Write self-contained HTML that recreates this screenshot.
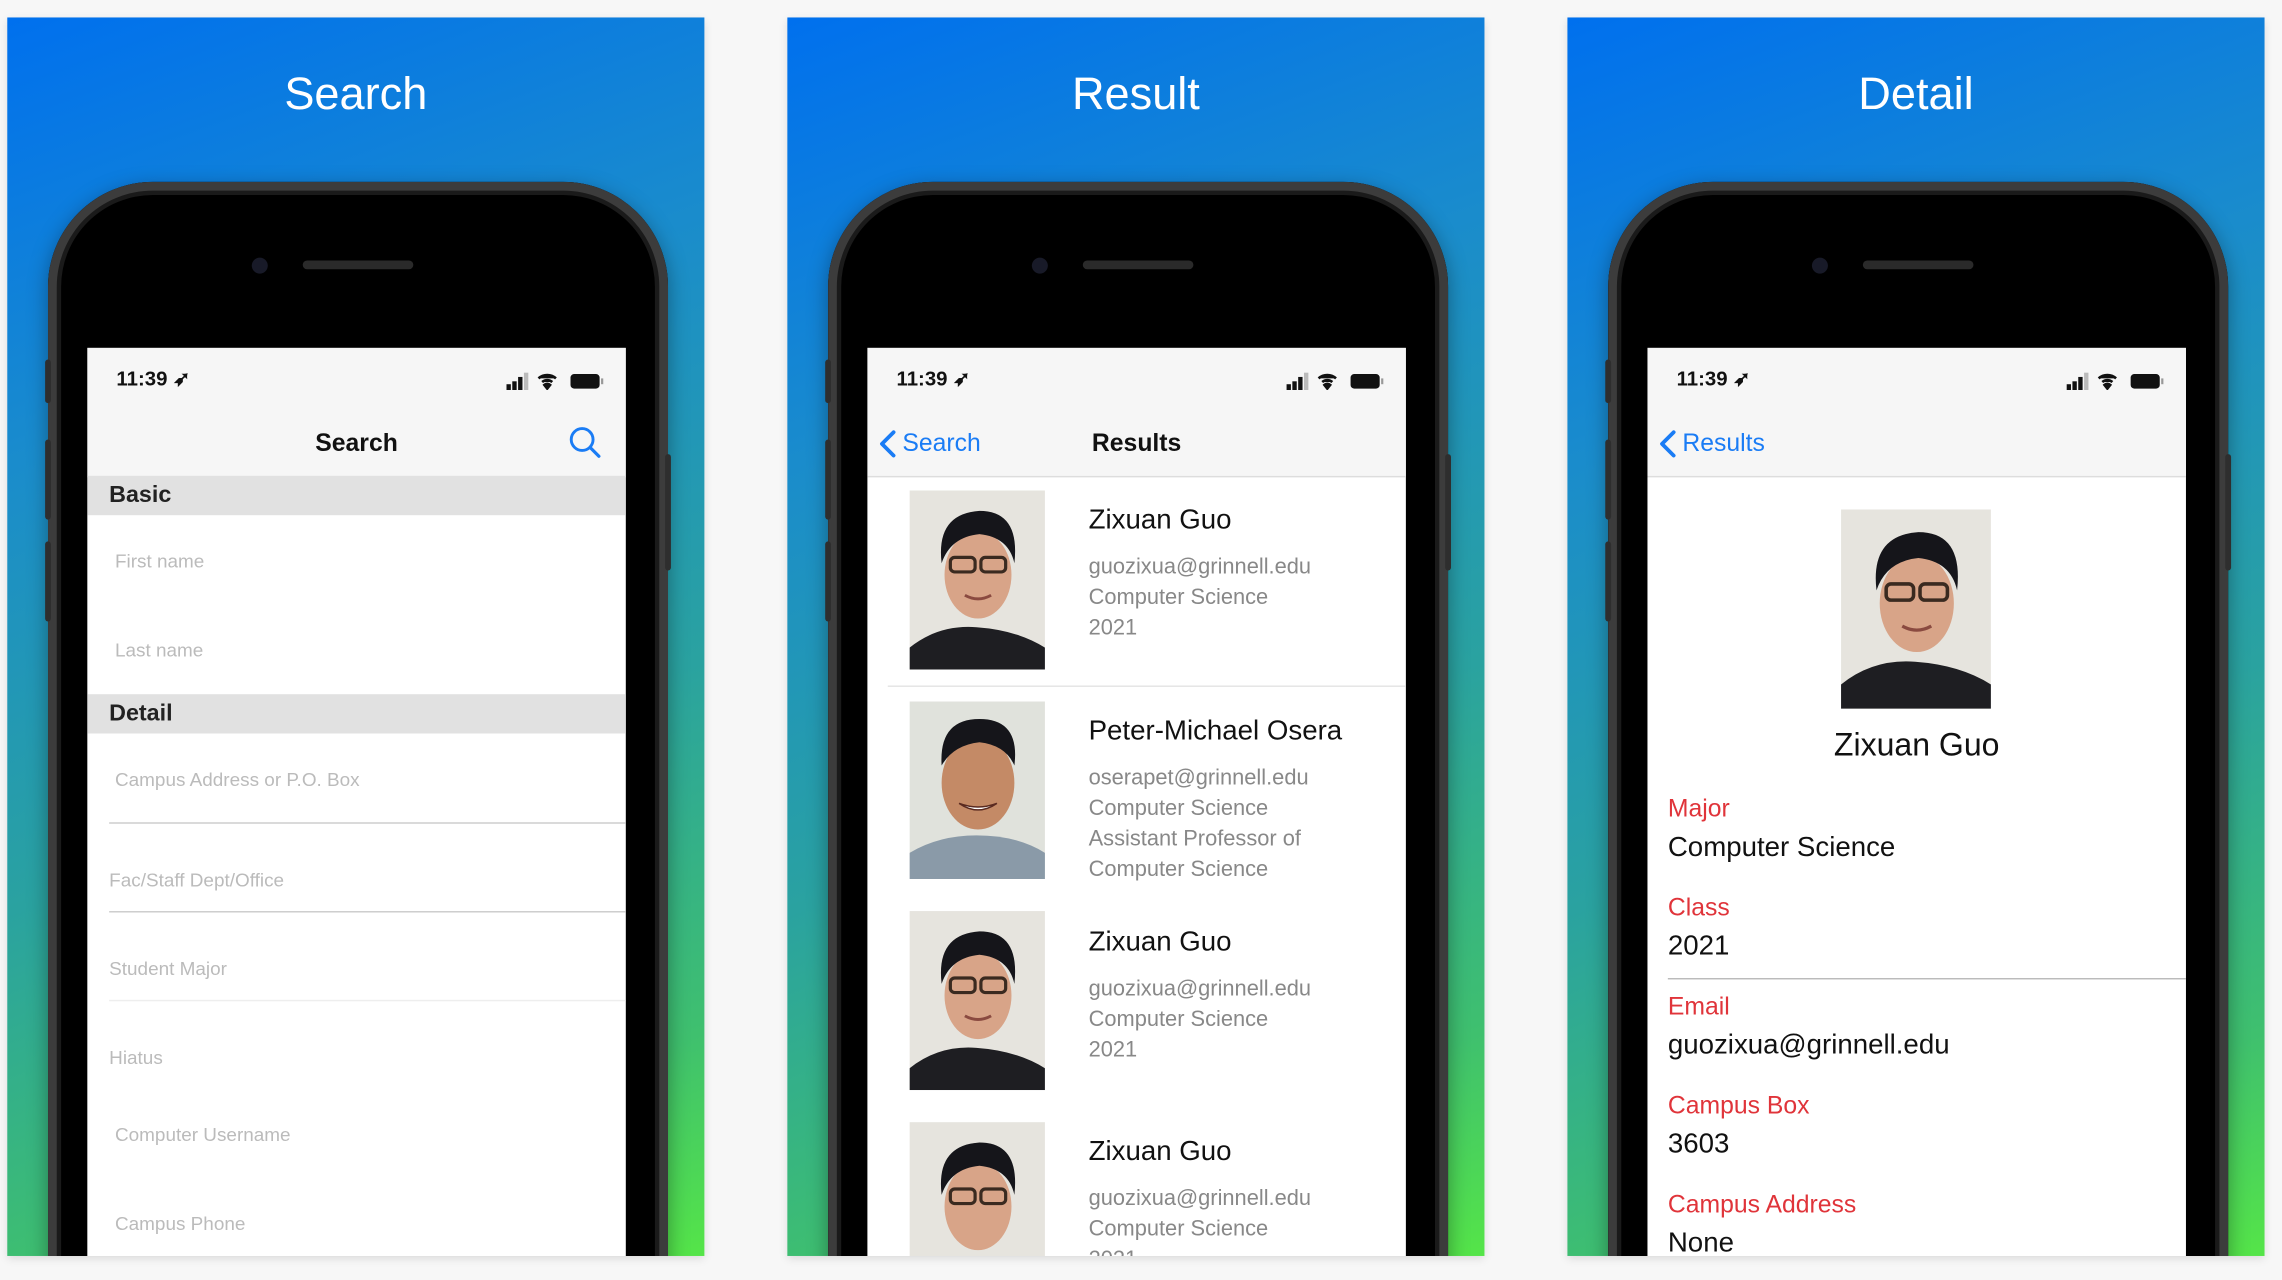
<!DOCTYPE html>
<html><head><meta charset="utf-8"><style>
html,body{margin:0;padding:0;background:#f7f7f7;overflow:hidden}
body{width:2282px;height:1280px;position:relative;font-family:"Liberation Sans",Arial,sans-serif}
#w{position:absolute;left:0;top:0;width:1568px;height:880px;overflow:hidden;transform:scale(1.45536);transform-origin:0 0}
.panel{position:absolute;top:12px;width:479px;height:851px;overflow:hidden;background:linear-gradient(160deg,#0070ee 0%,#1a8ccc 30%,#2aa2a0 60%,#3fc06e 85%,#55e548 100%);box-shadow:0 2px 6px rgba(0,0,0,.12)}
.ttl{position:absolute;left:0;right:0;top:34px;text-align:center;color:#fff;font-size:31px;line-height:38px}
.phone{position:absolute;left:28px;top:113px;width:426px;height:820px;border-radius:72px;background:#000;box-shadow:inset 0 0 0 6px #3c3c3c,inset 0 0 0 9px #1a1a1a,0 4px 14px rgba(0,0,0,.35)}
.cam{position:absolute;left:140px;top:52px;width:11px;height:11px;border-radius:50%;background:#181a28}
.spk{position:absolute;left:175px;top:54px;width:76px;height:6px;border-radius:3px;background:#2a2a2a}
.btn{position:absolute;width:4px;background:#2e2e2e;border-radius:2px}
.scr{position:absolute;left:55px;top:227px;width:370px;height:640px;background:#fff;overflow:hidden}
.sb{position:absolute;left:0;top:0;width:370px;height:88px;background:#f6f6f6;border-bottom:1px solid #ddd}
.t{position:absolute;white-space:nowrap}
.time{left:20px;top:13px;font-size:14px;font-weight:bold;color:#111}
.nav{top:56px;font-size:17px;font-weight:bold;color:#111;left:0;right:0;text-align:center}
.blue{color:#1a7cf5}
.ph{font-size:13px;color:#bbb}
.hr{position:absolute;height:1px;background:#ccc}
.name{font-size:19px;color:#111}
.sub{font-size:15px;color:#888;line-height:21px}
.lab{font-size:17px;color:#e0343a}
.val{font-size:19px;color:#111}
</style></head><body><div id="w">

<!-- Panel 1 -->
<div class="panel" style="left:5px">
<div class="ttl">Search</div>
<div class="phone"><div class="cam"></div><div class="spk"></div></div>
<div class="btn" style="left:26px;top:235px;height:30px"></div>
<div class="btn" style="left:26px;top:290px;height:55px"></div>
<div class="btn" style="left:26px;top:360px;height:55px"></div>
<div class="btn" style="left:452px;top:300px;height:80px"></div>
<div class="scr">
<div class="sb"></div>
<div class="t time">11:39 ➶</div>
<svg class="t" style="left:288px;top:17px" width="68" height="12" viewBox="0 0 68 12"><rect x="0" y="8" width="3" height="4" fill="#111"/><rect x="4" y="6" width="3" height="6" fill="#111"/><rect x="8" y="3" width="3" height="9" fill="#111"/><rect x="12" y="0" width="3" height="12" fill="#bbb"/><path d="M22 4a9 9 0 0 1 12 0M24.5 6.5a5.5 5.5 0 0 1 7 0M28 11l-2-2.5a3 3 0 0 1 4 0z" stroke="#111" stroke-width="1.8" fill="#111"/><rect x="44" y="1" width="20" height="10" rx="2.5" fill="#111"/><rect x="65" y="4" width="1.5" height="4" fill="#999"/></svg>
<div class="t nav">Search</div>
<svg class="t" style="left:330px;top:53px" width="24" height="24" viewBox="0 0 24 24"><circle cx="10" cy="10" r="7.5" stroke="#1a7cf5" stroke-width="2" fill="none"/><path d="M15.5 15.5l6 6" stroke="#1a7cf5" stroke-width="2.2" stroke-linecap="round"/></svg>
<div class="t" style="left:0;top:88px;width:370px;height:27px;background:#e1e1e1"></div>
<div class="t" style="left:15px;top:93px;font-size:16px;font-weight:bold;color:#222">Basic</div>
<div class="t ph" style="left:19px;top:139px">First name</div>
<div class="t ph" style="left:19px;top:200px">Last name</div>
<div class="t" style="left:0;top:238px;width:370px;height:27px;background:#e1e1e1"></div>
<div class="t" style="left:15px;top:243px;font-size:16px;font-weight:bold;color:#222">Detail</div>
<div class="t ph" style="left:19px;top:289px">Campus Address or P.O. Box</div>
<div class="hr" style="left:15px;right:0;top:326px"></div>
<div class="t ph" style="left:15px;top:358px">Fac/Staff Dept/Office</div>
<div class="hr" style="left:15px;right:0;top:387px"></div>
<div class="t ph" style="left:15px;top:419px">Student Major</div>
<div class="hr" style="left:15px;right:0;top:448px;background:#eee"></div>
<div class="t ph" style="left:15px;top:480px">Hiatus</div>
<div class="t ph" style="left:19px;top:533px">Computer Username</div>
<div class="t ph" style="left:19px;top:594px">Campus Phone</div>
</div>
</div>

<!-- Panel 2 -->
<div class="panel" style="left:541px">
<div class="ttl">Result</div>
<div class="phone"><div class="cam"></div><div class="spk"></div></div>
<div class="btn" style="left:26px;top:235px;height:30px"></div>
<div class="btn" style="left:26px;top:290px;height:55px"></div>
<div class="btn" style="left:26px;top:360px;height:55px"></div>
<div class="btn" style="left:452px;top:300px;height:80px"></div>
<div class="scr">
<div class="sb"></div>
<div class="t time">11:39 ➶</div>
<svg class="t" style="left:288px;top:17px" width="68" height="12" viewBox="0 0 68 12"><rect x="0" y="8" width="3" height="4" fill="#111"/><rect x="4" y="6" width="3" height="6" fill="#111"/><rect x="8" y="3" width="3" height="9" fill="#111"/><rect x="12" y="0" width="3" height="12" fill="#bbb"/><path d="M22 4a9 9 0 0 1 12 0M24.5 6.5a5.5 5.5 0 0 1 7 0M28 11l-2-2.5a3 3 0 0 1 4 0z" stroke="#111" stroke-width="1.8" fill="#111"/><rect x="44" y="1" width="20" height="10" rx="2.5" fill="#111"/><rect x="65" y="4" width="1.5" height="4" fill="#999"/></svg>
<div class="t nav">Results</div>
<svg class="t" style="left:8px;top:56px" width="12" height="20" viewBox="0 0 12 20"><path d="M10 2L2 10l8 8" stroke="#1a7cf5" stroke-width="2.6" fill="none" stroke-linecap="round" stroke-linejoin="round"/></svg>
<div class="t blue" style="left:24px;top:56px;font-size:17px">Search</div>

<svg class="t" style="left:29px;top:98px" width="93" height="123" viewBox="0 0 93 123"><rect width="93" height="123" fill="#e6e4de"/><path d="M0 123V108q20-16 46-14q28 2 47 14V123z" fill="#1e1e22"/><ellipse cx="47" cy="58" rx="23" ry="30" fill="#d8a488"/><path d="M22 50q-4-34 26-36q28 0 24 36q-4-18-24-20q-20 2-26 20z" fill="#15151a"/><rect x="28" y="46" width="17" height="10" rx="3" fill="none" stroke="#3a2a20" stroke-width="2.2"/><rect x="49" y="46" width="17" height="10" rx="3" fill="none" stroke="#3a2a20" stroke-width="2.2"/><path d="M38 72q9 5 18 0" stroke="#8a4a40" stroke-width="2" fill="none"/></svg>
<div class="t name" style="left:152px;top:108px">Zixuan Guo</div>
<div class="t sub" style="left:152px;top:140px">guozixua@grinnell.edu<br>Computer Science<br>2021</div>
<div class="hr" style="left:14px;right:0;top:232px;background:#e4e4e4"></div>

<svg class="t" style="left:29px;top:243px" width="93" height="122" viewBox="0 0 93 122"><rect width="93" height="122" fill="#e0e2dc"/><path d="M0 122V104q20-12 46-12q28 0 47 12V122z" fill="#8a9aa8"/><ellipse cx="47" cy="56" rx="25" ry="32" fill="#c48a66"/><path d="M22 44q-2-32 26-32q28 0 24 32q-6-14-24-16q-18 2-26 16z" fill="#15151a"/><path d="M34 70q13 9 26 0q-13 5-26 0z" fill="#fff" stroke="#5a2a20"/></svg>
<div class="t name" style="left:152px;top:253px">Peter-Michael Osera</div>
<div class="t sub" style="left:152px;top:285px">oserapet@grinnell.edu<br>Computer Science<br>Assistant Professor of<br>Computer Science</div>

<svg class="t" style="left:29px;top:387px" width="93" height="123" viewBox="0 0 93 123"><rect width="93" height="123" fill="#e6e4de"/><path d="M0 123V108q20-16 46-14q28 2 47 14V123z" fill="#1e1e22"/><ellipse cx="47" cy="58" rx="23" ry="30" fill="#d8a488"/><path d="M22 50q-4-34 26-36q28 0 24 36q-4-18-24-20q-20 2-26 20z" fill="#15151a"/><rect x="28" y="46" width="17" height="10" rx="3" fill="none" stroke="#3a2a20" stroke-width="2.2"/><rect x="49" y="46" width="17" height="10" rx="3" fill="none" stroke="#3a2a20" stroke-width="2.2"/><path d="M38 72q9 5 18 0" stroke="#8a4a40" stroke-width="2" fill="none"/></svg>
<div class="t name" style="left:152px;top:398px">Zixuan Guo</div>
<div class="t sub" style="left:152px;top:430px">guozixua@grinnell.edu<br>Computer Science<br>2021</div>

<svg class="t" style="left:29px;top:532px" width="93" height="123" viewBox="0 0 93 123"><rect width="93" height="123" fill="#e6e4de"/><path d="M0 123V108q20-16 46-14q28 2 47 14V123z" fill="#1e1e22"/><ellipse cx="47" cy="58" rx="23" ry="30" fill="#d8a488"/><path d="M22 50q-4-34 26-36q28 0 24 36q-4-18-24-20q-20 2-26 20z" fill="#15151a"/><rect x="28" y="46" width="17" height="10" rx="3" fill="none" stroke="#3a2a20" stroke-width="2.2"/><rect x="49" y="46" width="17" height="10" rx="3" fill="none" stroke="#3a2a20" stroke-width="2.2"/></svg>
<div class="t name" style="left:152px;top:542px">Zixuan Guo</div>
<div class="t sub" style="left:152px;top:574px">guozixua@grinnell.edu<br>Computer Science<br>2021</div>
</div>
</div>

<!-- Panel 3 -->
<div class="panel" style="left:1077px">
<div class="ttl">Detail</div>
<div class="phone"><div class="cam"></div><div class="spk"></div></div>
<div class="btn" style="left:26px;top:235px;height:30px"></div>
<div class="btn" style="left:26px;top:290px;height:55px"></div>
<div class="btn" style="left:26px;top:360px;height:55px"></div>
<div class="btn" style="left:452px;top:300px;height:80px"></div>
<div class="scr">
<div class="sb"></div>
<div class="t time">11:39 ➶</div>
<svg class="t" style="left:288px;top:17px" width="68" height="12" viewBox="0 0 68 12"><rect x="0" y="8" width="3" height="4" fill="#111"/><rect x="4" y="6" width="3" height="6" fill="#111"/><rect x="8" y="3" width="3" height="9" fill="#111"/><rect x="12" y="0" width="3" height="12" fill="#bbb"/><path d="M22 4a9 9 0 0 1 12 0M24.5 6.5a5.5 5.5 0 0 1 7 0M28 11l-2-2.5a3 3 0 0 1 4 0z" stroke="#111" stroke-width="1.8" fill="#111"/><rect x="44" y="1" width="20" height="10" rx="2.5" fill="#111"/><rect x="65" y="4" width="1.5" height="4" fill="#999"/></svg>
<svg class="t" style="left:8px;top:56px" width="12" height="20" viewBox="0 0 12 20"><path d="M10 2L2 10l8 8" stroke="#1a7cf5" stroke-width="2.6" fill="none" stroke-linecap="round" stroke-linejoin="round"/></svg>
<div class="t blue" style="left:24px;top:56px;font-size:17px">Results</div>

<svg class="t" style="left:133px;top:111px" width="103" height="137" viewBox="0 0 93 123" preserveAspectRatio="none"><rect width="93" height="123" fill="#e6e4de"/><path d="M0 123V108q20-16 46-14q28 2 47 14V123z" fill="#1e1e22"/><ellipse cx="47" cy="58" rx="23" ry="30" fill="#d8a488"/><path d="M22 50q-4-34 26-36q28 0 24 36q-4-18-24-20q-20 2-26 20z" fill="#15151a"/><rect x="28" y="46" width="17" height="10" rx="3" fill="none" stroke="#3a2a20" stroke-width="2.2"/><rect x="49" y="46" width="17" height="10" rx="3" fill="none" stroke="#3a2a20" stroke-width="2.2"/><path d="M38 72q9 5 18 0" stroke="#8a4a40" stroke-width="2" fill="none"/></svg>
<div class="t" style="left:0;right:0;top:260px;text-align:center;font-size:22px;color:#111">Zixuan Guo</div>
<div class="t lab" style="left:14px;top:307px">Major</div>
<div class="t val" style="left:14px;top:333px">Computer Science</div>
<div class="t lab" style="left:14px;top:375px">Class</div>
<div class="t val" style="left:14px;top:401px">2021</div>
<div class="hr" style="left:14px;right:0;top:433px;background:#bbb"></div>
<div class="t lab" style="left:14px;top:443px">Email</div>
<div class="t val" style="left:14px;top:469px">guozixua@grinnell.edu</div>
<div class="t lab" style="left:14px;top:511px">Campus Box</div>
<div class="t val" style="left:14px;top:537px">3603</div>
<div class="t lab" style="left:14px;top:579px">Campus Address</div>
<div class="t val" style="left:14px;top:605px">None</div>
</div>
</div>

</div></body></html>
